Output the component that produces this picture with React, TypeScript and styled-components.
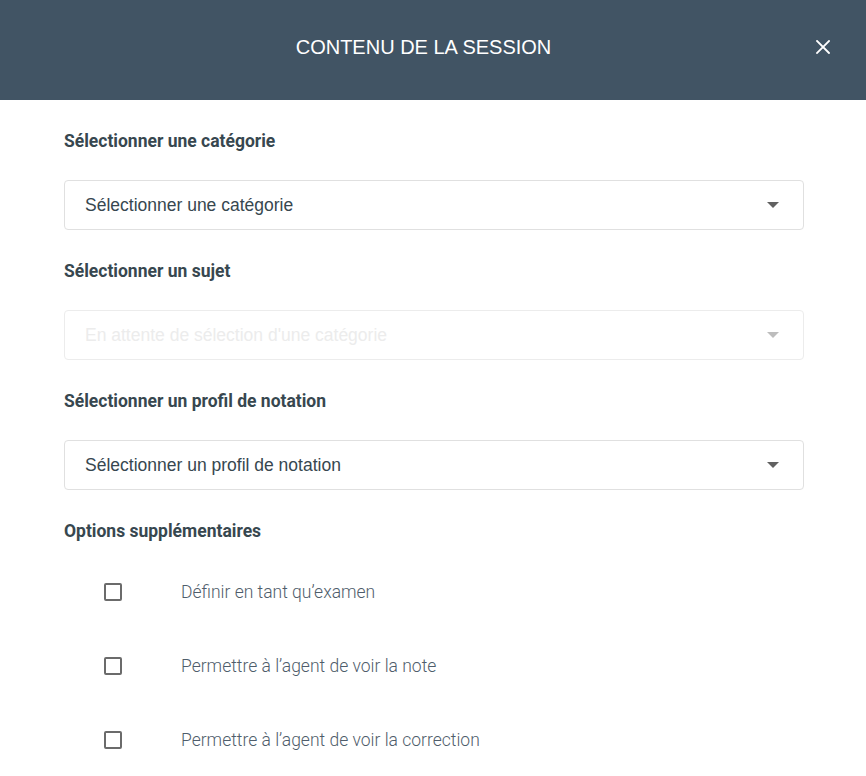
import { useState } from "react";
import styled, { createGlobalStyle } from "styled-components";

const GlobalStyle = createGlobalStyle`
  html, body {
    margin: 0;
    padding: 0;
    background: #fff;
  }
`

const Modal = styled.div`
  width: 866px;
  min-height: 776px;
  background: #fff;
`

const Header = styled.header`
  height: 100px;
  background: #415464;
  display: flex;
  align-items: center;
  justify-content: center;
  position: relative;
  padding-right: 19px;
  box-sizing: border-box;
`

const Title = styled.h2`
  margin: 0;
  color: #fff;
  font-family: "Liberation Sans", Arial, sans-serif;
  font-weight: 400;
  font-size: 20px;
  transform: translateY(-3px);
`

const CloseButton = styled.button`
  position: absolute;
  right: 34px;
  top: 38px;
  width: 18px;
  height: 18px;
  padding: 0;
  border: none;
  background: transparent;
  cursor: pointer;
  display: flex;
  align-items: center;
  justify-content: center;
`

const Body = styled.div`
  padding: 27px 62px 0 64px;
`

const Section = styled.div`
  display: flex;
  flex-direction: column;
  margin-bottom: 27px;
`

const Label = styled.div`
  font-family: Roboto, "Noto Sans", sans-serif;
  font-weight: 700;
  font-size: 17.5px;
  color: #37474f;
  line-height: 28px;
  margin-bottom: 25px;
`

const SelectBox = styled.div<{ $disabled?: boolean }>`
  height: 50px;
  box-sizing: border-box;
  border: 1px solid ${p => p.$disabled ? '#ececec' : '#e0e0e0'};
  border-radius: 4px;
  display: flex;
  align-items: center;
  justify-content: space-between;
  padding: 0 24px 0 20px;
  font-family: "Liberation Sans", Arial, sans-serif;
  font-size: 17.5px;
  color: ${p => p.$disabled ? '#ececec' : '#37474f'};
  cursor: ${p => p.$disabled ? 'default' : 'pointer'};
`

const Caret = styled.span<{ $disabled?: boolean }>`
  width: 0;
  height: 0;
  border-left: 6px solid transparent;
  border-right: 6px solid transparent;
  border-top: 6px solid ${p => p.$disabled ? '#bdbdbd' : '#616161'};
`

const Options = styled.div`
  display: flex;
  flex-direction: column;
  padding: 23px 0 0 40px;
`

const OptionRow = styled.label`
  display: flex;
  align-items: center;
  height: 74px;
  margin-top: -13px;
  margin-bottom: 13px;
  cursor: pointer;
`

const Box = styled.span<{ $checked: boolean }>`
  width: 18px;
  height: 18px;
  box-sizing: border-box;
  border: 2px solid #6b6b6b;
  border-radius: 2px;
  background: ${p => p.$checked ? '#6b6b6b' : '#fff'};
  margin-right: 59px;
  flex-shrink: 0;
`

const OptionText = styled.span`
  font-family: Roboto, "Noto Sans", sans-serif;
  font-weight: 300;
  font-size: 17.5px;
  color: #4f5d6b;
`

const selects = [
  { label: 'Sélectionner une catégorie', value: 'Sélectionner une catégorie' },
  { label: 'Sélectionner un sujet', value: "En attente de sélection d'une catégorie", disabled: true },
  { label: 'Sélectionner un profil de notation', value: 'Sélectionner un profil de notation' },
]

const options = [
  'Définir en tant qu’examen',
  'Permettre à l’agent de voir la note',
  'Permettre à l’agent de voir la correction',
]

export default function App() {
  const [checked, setChecked] = useState<boolean[]>([false, false, false])

  return (
    <Modal>
      <GlobalStyle />
      <Header>
        <Title>CONTENU DE LA SESSION</Title>
        <CloseButton aria-label="Fermer">
          <svg width="14" height="14" viewBox="0 0 14 14">
            <path d="M1 1 L13 13 M13 1 L1 13" stroke="#fff" strokeWidth="1.8" strokeLinecap="square" />
          </svg>
        </CloseButton>
      </Header>
      <Body>
        {selects.map(s => (
          <Section key={s.label}>
            <Label>{s.label}</Label>
            <SelectBox $disabled={s.disabled}>
              <span>{s.value}</span>
              <Caret $disabled={s.disabled} />
            </SelectBox>
          </Section>
        ))}
        <Label style={{ marginBottom: 0 }}>Options supplémentaires</Label>
        <Options>
          {options.map((o, i) => (
            <OptionRow key={o} onClick={() => setChecked(c => c.map((v, j) => j === i ? !v : v))}>
              <Box $checked={checked[i]} />
              <OptionText>{o}</OptionText>
            </OptionRow>
          ))}
        </Options>
      </Body>
    </Modal>
  )
}
